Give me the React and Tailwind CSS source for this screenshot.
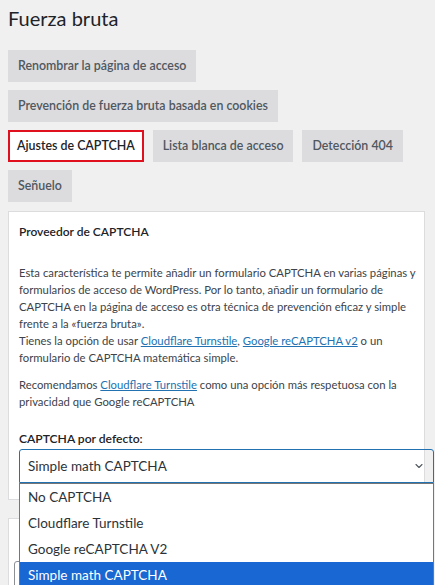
import { ChevronDown } from 'lucide-react';

const tabs = [
  ['Renombrar la página de acceso'],
  ['Prevención de fuerza bruta basada en cookies'],
  ['Ajustes de CAPTCHA', 'Lista blanca de acceso', 'Detección 404'],
  ['Señuelo'],
];

export default function App() {
  return (
    <div className="h-[585px] w-[435px] overflow-hidden bg-[#f0f0f1] font-['Lato',sans-serif] text-[#3c434a]">
      <h1 className="pl-2 pt-[3px] text-[20px] leading-[30px] text-[#1d2327]">Fuerza bruta</h1>

      {/* Tabs */}
      <div className="mt-[17px] flex flex-col gap-2 pl-2">
        {tabs.map((row, i) => (
          <div key={i} className="flex gap-[9px]">
            {row.map((t) => (
              <Tab key={t} active={t === 'Ajustes de CAPTCHA'}>{t}</Tab>
            ))}
          </div>
        ))}
      </div>

      {/* Panel */}
      <div className="relative ml-2 mt-[9px] w-[417px] border border-[#dcdcde] bg-white pb-4 pl-[10px] pr-[5px] pt-[11px]">
        <h2 className="text-[12px] font-semibold leading-[17px] text-[#1d2327]">Proveedor de CAPTCHA</h2>
        <p className="mt-[24px] text-[11.3px] leading-[17px]">
          Esta característica te permite añadir un formulario CAPTCHA en varias páginas y formularios de acceso de WordPress. Por lo tanto, añadir un formulario de CAPTCHA en la página de acceso es otra técnica de prevención eficaz y simple frente a la «fuerza bruta».
          <br />
          Tienes la opción de usar <A>Cloudflare Turnstile</A>, <A>Google reCAPTCHA v2</A> o un formulario de CAPTCHA matemática simple.
        </p>
        <p className="mt-[10px] text-[11.3px] leading-[17px]">
          Recomendamos <A>Cloudflare Turnstile</A> como una opción más respetuosa con la privacidad que Google reCAPTCHA
        </p>
        <label className="mt-[20px] block text-[12.1px] font-semibold leading-[17px] text-[#1d2327]">CAPTCHA por defecto:</label>
        <div className="relative mt-[2px]">
          <div className="flex h-[34px] w-[415px] items-center justify-between rounded-t-[3px] border border-[#2271b1] pl-2 pr-[8px] text-[13.5px] text-[#2c3338]">
            <span>Simple math CAPTCHA</span>
            <ChevronDown size={12} strokeWidth={2.2} className="text-[#50575e]" />
          </div>
          <ul className="absolute left-0 top-[34px] z-10 w-[415px] border border-[#767676] bg-white text-[13.5px] text-[#2c3338]">
            <li className="flex h-[26px] items-center pl-2">No CAPTCHA</li>
            <li className="flex h-[26px] items-center pl-2">Cloudflare Turnstile</li>
            <li className="flex h-[26px] items-center pl-2">Google reCAPTCHA V2</li>
            <li className="flex h-[26px] items-center bg-[#1967d2] pl-2 text-white">Simple math CAPTCHA</li>
          </ul>
        </div>
      </div>

      {/* Next panel, mostly hidden by dropdown */}
      <div className="ml-2 mt-[18px] h-[80px] w-[417px] border border-[#dcdcde] bg-white pl-[5px] pt-[42px]">
        <div className="h-[40px] w-[300px] rounded-[3px] border border-[#8c8f94]" />
      </div>
    </div>
  );
}

function Tab({ active, children }) {
  return (
    <div
      className={`flex h-[32px] items-center whitespace-nowrap text-[12.4px] font-semibold ${
        active
          ? 'border-2 border-[#e0101e] bg-white px-[7px] text-[#1d2327]'
          : 'border border-[#dcdcde] bg-[#dcdcde] px-[9px] text-[#50575e]'
      }`}
    >
      {children}
    </div>
  );
}

function A({ children }) {
  return <a className="text-[#2271b1] underline">{children}</a>;
}
